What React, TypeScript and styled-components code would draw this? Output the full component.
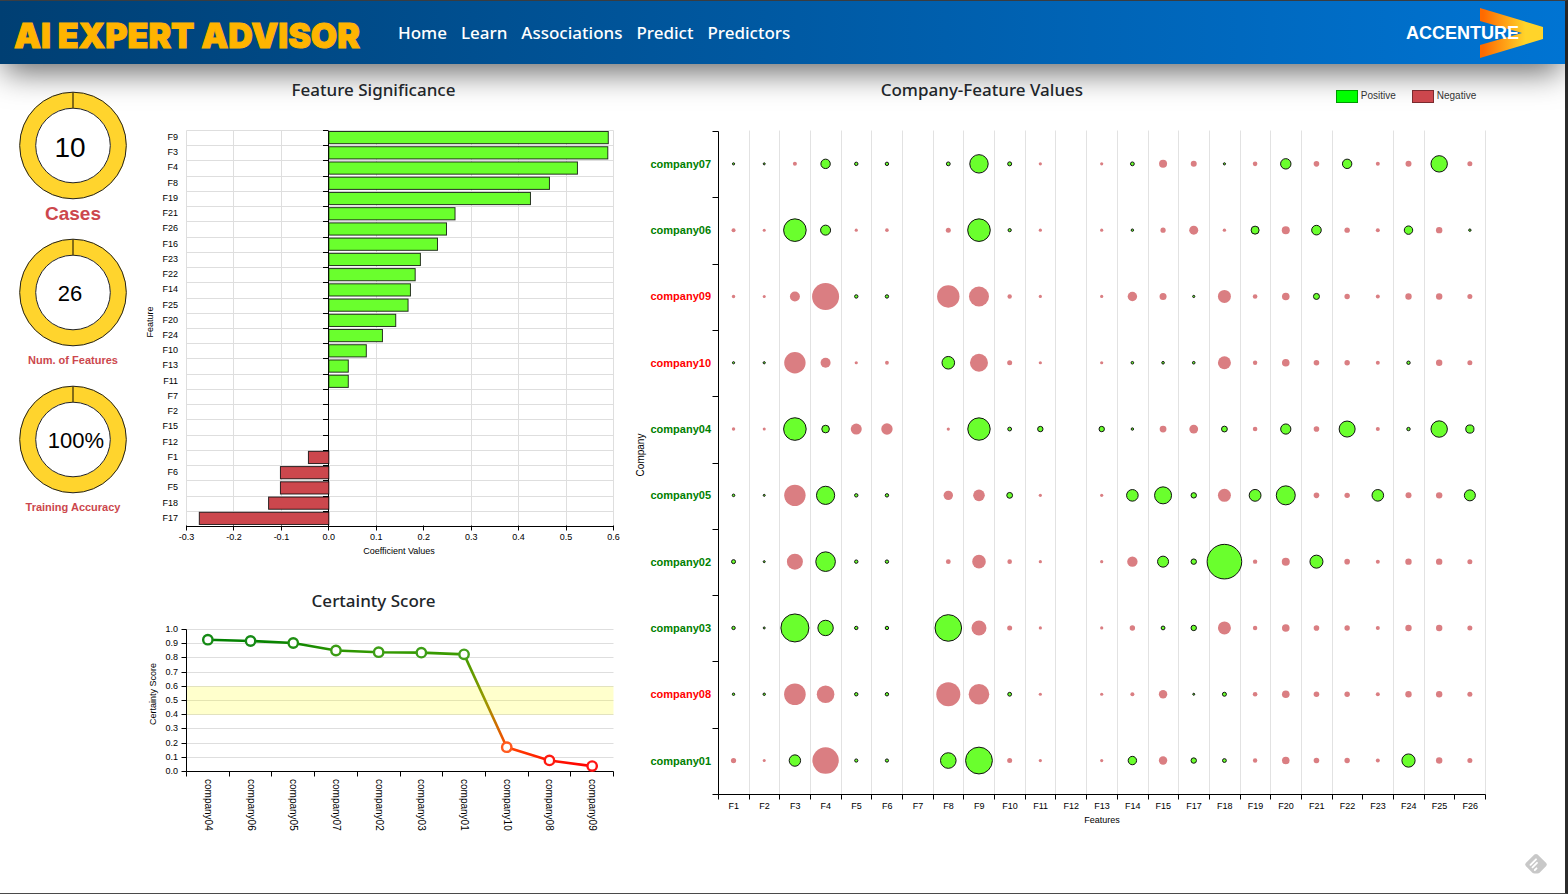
import React from "react";
import styled, { createGlobalStyle } from "styled-components";

const SANS = '"Liberation Sans", Arial, sans-serif';
const HUMANIST = '"Noto Sans", "Open Sans", sans-serif';
const GREEN = "#6aff2d";
const RED = "#cc474d";

const GlobalStyle = createGlobalStyle`
  * { box-sizing: border-box; }
  body { margin: 0; background: #fff; color: #212529; font-family: ${HUMANIST}; }
`;

const Page = styled.div`
  position: relative;
  min-height: 100vh;
  border: solid #2b2b2b;
  border-width: 1px 3px 1px 0;
  border-top-color: #3f4247;
  border-bottom-color: #4a4a4a;
`;

const Header = styled.header`
  display: flex;
  align-items: center;
  height: 63px;
  padding: 0 22px 0 14px;
  background: linear-gradient(to right, #003f73, #0074d3);
  box-shadow: 0 12px 32px -4px rgba(0, 0, 0, 0.6);
`;

const Brand = styled.a`
  color: #ffb400;
  font: 900 34px/40px Inter, sans-serif;
  -webkit-text-stroke: 1px #ffb400;
  text-decoration: none;
  white-space: nowrap;
  padding-top: 6px;
`;

const Nav = styled.nav`
  display: flex;
  gap: 14px;
  margin-left: 38px;
`;

const NavLink = styled.a`
  color: #fff;
  font: 500 17px/24px ${HUMANIST};
  text-decoration: none;
`;

const LogoLink = styled.a`
  display: block;
  height: 50px;
  margin-left: auto;
`;

const Dashboard = styled.main`
  display: grid;
  grid-template-columns: 146px minmax(0, 486fr) minmax(0, 933fr);
  align-items: start;
`;

const Gauges = styled.aside`
  display: flex;
  flex-direction: column;
  padding-top: 16px;
`;

const Panel = styled.section`
  display: flex;
  flex-direction: column;
`;

const Title = styled.h2`
  margin: 0;
  padding: 14px 0 6px;
  font: 500 17px/24px ${HUMANIST};
  text-align: center;
`;

const NarrowTitle = styled(Title)`
  padding-right: 31px;
`;

const WideHead = styled.div`
  display: grid;
  grid-template-columns: 3fr 1fr;
`;

const Legend = styled.ul`
  display: flex;
  align-items: center;
  gap: 16px;
  margin: 0;
  padding: 20px 0 0 4px;
  list-style: none;
  font: 10px/12px ${SANS};
  color: #333;
`;

const LegendItem = styled.li`
  display: flex;
  align-items: center;
  gap: 3px;
`;

const Swatch = styled.span<{ $color: string }>`
  width: 22px;
  height: 13px;
  border: 1px solid rgba(0, 0, 0, 0.4);
  background: ${(p) => p.$color};
`;

const Chart = styled.svg`
  display: block;
  width: 100%;
  height: auto;
  font-family: ${SANS};
  font-size: 9px;
  fill: #000;
`;

const FloatingButton = styled.button`
  position: absolute;
  right: 17px;
  bottom: 17px;
  width: 24px;
  height: 24px;
  padding: 0;
  border: 0;
  background: none;
`;

const coefficients: [string, number][] = [
  ["F9", 0.589], ["F3", 0.588], ["F4", 0.524], ["F8", 0.465], ["F19", 0.425],
  ["F21", 0.266], ["F26", 0.248], ["F16", 0.229], ["F23", 0.193], ["F22", 0.182],
  ["F14", 0.172], ["F25", 0.167], ["F20", 0.141], ["F24", 0.113], ["F10", 0.079],
  ["F13", 0.041], ["F11", 0.041], ["F7", 0], ["F2", 0], ["F15", 0], ["F12", 0],
  ["F1", -0.043], ["F6", -0.102], ["F5", -0.102], ["F18", -0.127], ["F17", -0.273],
];

const certainty: [string, number, string][] = [
  ["company04", 0.928, "#158a15"], ["company06", 0.919, "#158a15"], ["company05", 0.905, "#1f8f12"],
  ["company07", 0.852, "#3a9c14"], ["company02", 0.84, "#3d9e16"], ["company03", 0.837, "#3d9e16"],
  ["company01", 0.825, "#45a01c"], ["company10", 0.171, "#ff5a1f"], ["company08", 0.078, "#ff1a10"],
  ["company09", 0.038, "#ff1414"],
];

const features = Array.from({ length: 26 }, (_, i) => i + 1).filter((n) => n !== 16).map((n) => `F${n}`);

// Bubble radius per feature; negative radii are negative contributions, 0 is no bubble.
const bubbles: { name: string; good: boolean; values: number[] }[] = [
  { name: "company07", good: true, values: [1.6, 1.5, -2, 5.2, 2.2, 2.2, 0, 2.4, 9.7, 2.5, -1.6, 0, -1.6, 2.4, -4, -3, 1.6, -2.3, 5.7, -2.8, 5.2, -2, -3, 8.7, -2.5] },
  { name: "company06", good: true, values: [-2, -1.5, 11.8, 5.5, -1.6, -1.8, 0, -2.5, 11.8, 2.1, -1.6, 0, -1.6, 1.7, -2.6, -4.5, -1.7, 4.5, -4, 5.3, -2.7, -2, 4.7, -3.2, 1.7] },
  { name: "company09", good: false, values: [-1.7, -1.5, -5, -13.5, 2.2, 2.2, 0, -11.2, -10, -2.2, -1.6, 0, -1.6, -4.7, -3.5, 1.6, -6.5, -2.3, -3.8, 3.5, -2.7, -2, -3.2, -3.2, -2.5] },
  { name: "company10", good: false, values: [1.6, 1.6, -10.7, -5, -1.6, -1.9, 0, 6.8, -9, -2.5, -1.6, 0, -1.6, 1.8, 1.8, 1.8, -6.5, -2.2, -3.8, -2.8, -2.7, -2, 2.2, -3.2, -2.5] },
  { name: "company04", good: true, values: [-1.7, -1.5, 11.8, 4.3, -5.5, -5.7, 0, -1.6, 11.7, 2.4, 3.2, 0, 3.2, 1.7, -3.4, -4.4, 3.4, -2.3, 5.6, -2.8, 8.5, -2, 2.2, 8.7, 4.6] },
  { name: "company05", good: true, values: [1.8, 1.5, -10.7, 9.6, 2.2, 2.2, 0, -4.7, -5.8, 3.4, -1.6, 0, -1.6, 6.3, 9, 3.2, -6.5, 6.4, 10, -2.8, -2.7, 6.3, -3, -3.2, 6] },
  { name: "company02", good: true, values: [2.5, 1.5, -8, 10.3, 2.2, 2.2, 0, -2.4, -6.8, -2.3, -1.6, 0, -1.6, -5.2, 6, 3.2, 17.8, -2.2, -4, 7, -2.8, -2, -3.2, -3.2, -2.5] },
  { name: "company03", good: true, values: [2.2, 1.5, 14.5, 8.2, 2.2, 2.2, 0, 13.8, -7.5, -2.5, -1.6, 0, -1.6, -2.7, 2.4, 3.2, -6.5, -2.2, -3.8, -2.8, -2.7, -2, -3.2, -3.2, -2.5] },
  { name: "company08", good: false, values: [1.7, 1.7, -10.8, -8.8, 2.2, 2.2, 0, -12, -10.3, 2.4, -1.6, 0, -1.6, -2, -4.2, 1.5, 2.5, -2.3, -3.8, -2.8, -2.7, -2, -3.2, -3.2, -2.5] },
  { name: "company01", good: true, values: [-2.6, -1.5, 6.2, -13.2, 2.1, 2.1, 0, 8.3, 13.9, -2.5, -1.6, 0, -1.6, 4.7, -4.2, 3.2, 2.4, -2.2, -3.8, -2.8, -2.7, -2, 7.1, -3.2, -2.5] },
];

const snap = (n: number) => Math.floor(n) + 0.5;

function Gauge({ value, label, size, labelSize, textX }: { value: string; label: string; size: number; labelSize: number; textX: number }) {
  return (
    <Chart viewBox="0 0 146 147" role="img" aria-label={`${label}: ${value}`}>
      <circle cx="73" cy="65.5" r="45.5" fill="none" stroke="#ffd42d" strokeWidth="16" />
      <circle cx="73" cy="65.5" r="53.3" fill="none" stroke="#222" strokeWidth="1" />
      <circle cx="73" cy="65.5" r="37.3" fill="none" stroke="#222" strokeWidth="1" />
      <path d="M73 12V28" stroke="#4d3f0d" strokeWidth="1.4" />
      <text x={textX} y={65.5 + size * 0.4} fontSize={size} textAnchor="middle">{value}</text>
      <text x="73" y={labelSize > 12 ? 140 : 137} fontSize={labelSize} fontWeight="700" textAnchor="middle" fill={RED}>{label}</text>
    </Chart>
  );
}

function SignificanceChart() {
  const left = 40.5, right = 467.5, top = 22.5, bottom = 418.5;
  const x = (v: number) => left + ((v + 0.3) / 0.9) * (right - left);
  const band = (bottom - top) / coefficients.length;
  const ticks = Array.from({ length: 10 }, (_, i) => (i - 3) / 10);
  return (
    <Chart viewBox="0 0 486 467" role="img" aria-label="Feature Significance">
      <g stroke="#dedede">
        {ticks.map((t) => t !== 0.2 && <path key={t} d={`M${snap(x(t))} ${top}V${bottom}`} />)}
        {coefficients.map(([f], i) => <path key={f} d={`M${left} ${snap(top + i * band)}H${right}`} />)}
      </g>
      <g stroke="#000">
        <path d={`M${snap(x(0))} ${top}V${bottom}M${left} ${bottom}H${right}`} />
        {ticks.map((t) => <path key={t} d={`M${snap(x(t))} ${bottom - 1}v5`} />)}
        {coefficients.map(([f], i) => <path key={f} d={`M177 ${snap(top + i * band)}h5`} />)}
      </g>
      {coefficients.map(([f, v], i) => {
        const y = top + i * band;
        return (
          <g key={f}>
            {v !== 0 && (
              <rect x={Math.min(x(0), x(v))} y={y + 1} width={Math.abs(x(v) - x(0))} height={12.2}
                fill={v > 0 ? GREEN : RED} stroke="#000" strokeOpacity="0.8" />
            )}
            <text x="32" y={Math.floor(y + 10)} textAnchor="end">{f}</text>
          </g>
        );
      })}
      {ticks.map((t) => <text key={t} x={x(t)} y="432" textAnchor="middle">{t.toFixed(1)}</text>)}
      <text x="253" y="446" textAnchor="middle">Coefficient Values</text>
      <text transform="translate(7 214) rotate(-90)" textAnchor="middle">Feature</text>
    </Chart>
  );
}

function CertaintyChart() {
  const left = 40.5, right = 467.5, top = 10.5, bottom = 152.5;
  const step = (right - left) / certainty.length;
  const x = (i: number) => left + step * (i + 0.5);
  const y = (v: number) => bottom - v * (bottom - top);
  const stops = ["#008000", "#048200", "#0d8600", "#2a9400", "#339900", "#339900", "#3f9c00", "#ff4500", "#ff1500", "#ff0000"];
  const ticks = Array.from({ length: 11 }, (_, i) => i / 10);
  return (
    <Chart viewBox="0 0 486 225" role="img" aria-label="Certainty Score">
      <defs>
        <linearGradient id="score" gradientUnits="userSpaceOnUse" x1={x(0)} x2={x(9)} y1="0" y2="0">
          {stops.slice(0, 7).map((c, i) => <stop key={i} offset={i / 9} stopColor={c} />)}
          <stop offset={6.5 / 9} stopColor="#999900" />
          {stops.slice(7).map((c, i) => <stop key={i} offset={(i + 7) / 9} stopColor={c} />)}
        </linearGradient>
      </defs>
      {ticks.slice(1).map((t) => <path key={t} d={`M${left} ${snap(y(t))}H${right}`} stroke="#dedede" />)}
      <rect x={left} y={y(0.6)} width={right - left} height={y(0.4) - y(0.6)} fill="#ffff00" fillOpacity="0.2" />
      <path d={`M${left} ${top}V${bottom}H${right}`} fill="none" stroke="#000" />
      {ticks.map((t) => (
        <g key={t}>
          <path d={`M${left - 5} ${snap(y(t))}h5`} stroke="#000" />
          <text x="32" y={Math.round(y(t) + 2.5)} textAnchor="end">{t.toFixed(1)}</text>
        </g>
      ))}
      {Array.from({ length: 11 }, (_, i) => <path key={i} d={`M${snap(left + i * step)} ${bottom}v5`} stroke="#000" />)}
      <polyline points={certainty.map(([, v], i) => `${x(i)},${y(v)}`).join(" ")} fill="none" stroke="url(#score)" strokeWidth="2.6" />
      {certainty.map(([name, v, color], i) => (
        <g key={name}>
          <circle cx={x(i)} cy={y(v)} r="4.7" fill="#fff" stroke={color} strokeWidth="2.4" />
          <text transform={`translate(${x(i) - 3} 160) rotate(90)`} fontSize="10">{name}</text>
        </g>
      ))}
      <text transform="translate(10 75) rotate(-90)" textAnchor="middle">Certainty Score</text>
    </Chart>
  );
}

function BubbleChart() {
  const left = 86.5, right = 853.5, top = 23.5, bottom = 686.5;
  const col = (right - left) / features.length;
  const row = (bottom - top) / bubbles.length;
  const unlined = [21, 24];
  return (
    <Chart viewBox="0 0 933 740" role="img" aria-label="Company-Feature Values">
      {features.map((f, i) => (
        <g key={f}>
          {!unlined.includes(i + 1) && <path d={`M${snap(left + (i + 1) * col)} ${top - 1}V${bottom}`} stroke="#e2e2e2" />}
          <text x={left + (i + 0.5) * col} y="701" textAnchor="middle">{f}</text>
        </g>
      ))}
      <g stroke="#000">
        <path d={`M${left} ${top}V${bottom}H${right}`} fill="none" />
        {Array.from({ length: 26 }, (_, i) => <path key={i} d={`M${snap(left + i * col)} ${bottom}v5`} />)}
        {Array.from({ length: 11 }, (_, i) => <path key={i} d={`M${left - 6} ${snap(top + i * row)}h6`} />)}
      </g>
      {bubbles.map(({ name, good, values }, r) => {
        const cy = top - 0.8 + (r + 0.5) * row;
        return (
          <g key={name}>
            <text x="79" y={Math.round(cy + 4)} textAnchor="end" fontSize="11" fontWeight="700" fill={good ? "#008000" : "#ff0000"}>{name}</text>
            {values.map((v, i) => {
              const cx = left - 0.3 + (i + 0.5) * col;
              if (v === 0) return null;
              return v > 0
                ? <circle key={i} cx={cx} cy={cy} r={v - 0.5} fill={GREEN} stroke="#111" />
                : <circle key={i} cx={cx} cy={cy} r={-v} fill="#da7e82" />;
            })}
          </g>
        );
      })}
      <text x="470" y="715" textAnchor="middle">Features</text>
      <text transform="translate(12 347) rotate(-90)" textAnchor="middle" fontSize="10">Company</text>
    </Chart>
  );
}

function Logo() {
  return (
    <svg width="138" height="50" viewBox="0 0 138 50" role="img" aria-label="Accenture">
      <defs>
        <linearGradient id="arrow">
          <stop offset="0.05" stopColor="#ff6a00" />
          <stop offset="0.72" stopColor="#ffd42a" />
        </linearGradient>
      </defs>
      <path d="M75 0L138 19V31L75 50V37L117 25L75 13Z" fill="url(#arrow)" />
      <text x="1" y="31" fill="#fff" fontFamily='"Liberation Sans", Arial, sans-serif' fontSize="18" fontWeight="700">ACCENTURE</text>
    </svg>
  );
}

export default function App() {
  return (
    <Page>
      <GlobalStyle />
      <Header>
        <Brand href="#">AI EXPERT ADVISOR</Brand>
        <Nav>
          {["Home", "Learn", "Associations", "Predict", "Predictors"].map((item) => (
            <NavLink key={item} href={`#${item.toLowerCase()}`}>{item}</NavLink>
          ))}
        </Nav>
        <LogoLink href="#"><Logo /></LogoLink>
      </Header>
      <Dashboard>
        <Gauges>
          <Gauge value="10" label="Cases" size={28} labelSize={19} textX={70} />
          <Gauge value="26" label="Num. of Features" size={22} labelSize={11} textX={70} />
          <Gauge value="100%" label="Training Accuracy" size={22} labelSize={11} textX={76} />
        </Gauges>
        <Panel>
          <NarrowTitle>Feature Significance</NarrowTitle>
          <SignificanceChart />
          <NarrowTitle>Certainty Score</NarrowTitle>
          <CertaintyChart />
        </Panel>
        <Panel>
          <WideHead>
            <Title>Company-Feature Values</Title>
            <Legend>
              <LegendItem><Swatch $color="#00ff00" />Positive</LegendItem>
              <LegendItem><Swatch $color={RED} />Negative</LegendItem>
            </Legend>
          </WideHead>
          <BubbleChart />
        </Panel>
      </Dashboard>
      <FloatingButton aria-label="Save to Feedly">
        <svg width="24" height="24" viewBox="0 0 24 24">
          <path d="M10.4 2.6Q12 1.2 13.6 2.6L22.2 11Q23.6 12.6 22.2 14L15.6 20.7Q14.7 21.5 13.5 21.5H10.5Q9.3 21.5 8.4 20.7L1.8 14Q.4 12.6 1.8 11Z" fill="#c8c8c8" />
          <path d="M6.5 12.8L12 7.3M8.5 15.3L13 10.8M10.8 18L12.5 16.3" stroke="#fff" strokeWidth="1.9" strokeLinecap="round" />
        </svg>
      </FloatingButton>
    </Page>
  );
}
